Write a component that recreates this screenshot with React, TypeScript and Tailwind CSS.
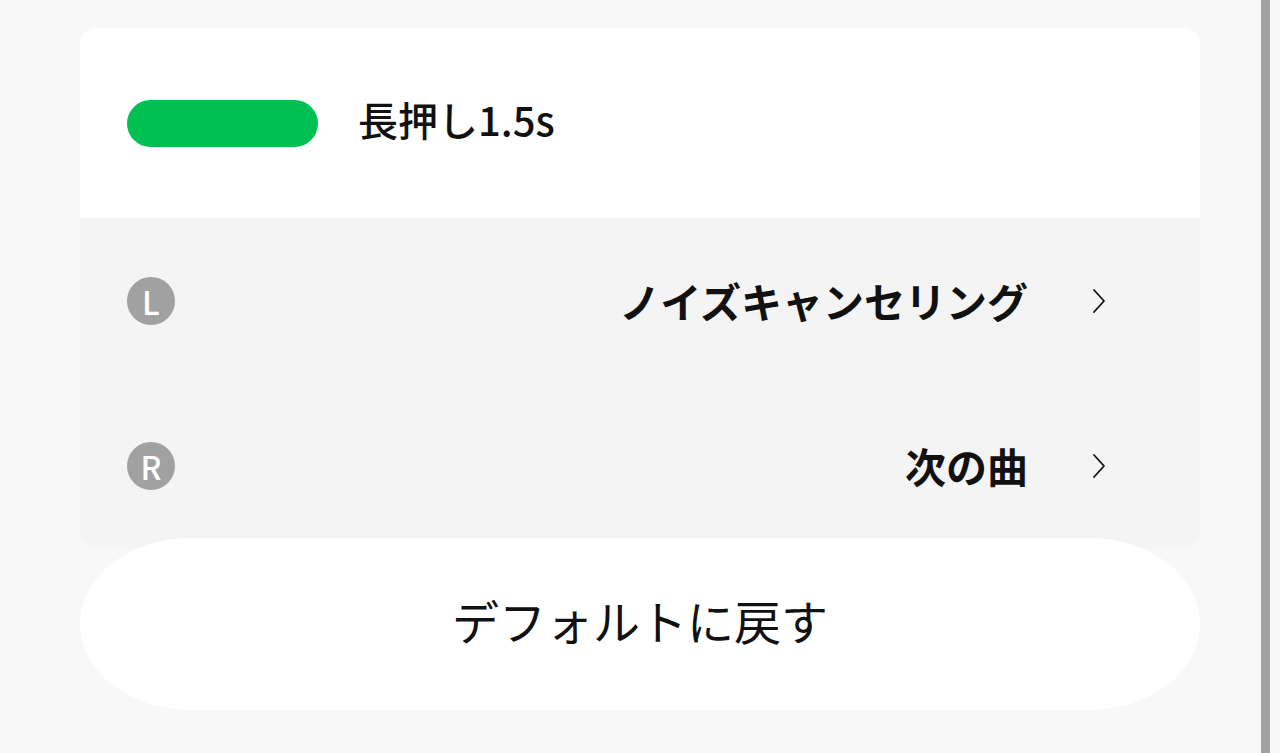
const FONT = "font-['Noto_Sans_CJK_JP','Noto_Sans',sans-serif]"

function Chevron() {
  return (
    <svg viewBox="0 0 16 26" className="w-[16px] h-[26px]" fill="none" stroke="#111" strokeWidth={1.8}
      strokeLinecap="round" strokeLinejoin="round">
      <polyline points="3,2 13,13 3,24" />
    </svg>
  )
}

function SideRow({ side, label }: { side: string; label: string }) {
  return (
    <div className="h-[165px] flex items-center pl-[47px] pr-[93px]">
      <div className="w-[48px] h-[48px] rounded-full bg-[#a1a1a1] flex items-center justify-center text-white text-[32px] font-medium leading-none">
        {side}
      </div>
      <div className="flex-1 text-right text-[41px] font-bold text-[#111] leading-none pr-[63px]">{label}</div>
      <Chevron />
    </div>
  )
}

export default function App() {
  return (
    <div className={`w-[1280px] h-[753px] bg-[#f8f8f8] flex overflow-hidden ${FONT}`}>
      <div className="w-[1261px] pl-[80px] pr-[61px] pt-[28px] flex flex-col">
        <div className="rounded-[16px] overflow-hidden">
          <div className="h-[190px] bg-white flex items-center pl-[47px]">
            <div className="w-[191px] h-[47px] rounded-full bg-[#00c054]" />
            <span className="ml-[40px] mb-[8px] text-[40px] font-medium text-[#111] leading-none">長押し1.5s</span>
          </div>
          <div className="bg-[#f4f4f4]">
            <SideRow side="L" label="ノイズキャンセリング" />
            <SideRow side="R" label="次の曲" />
          </div>
        </div>
        <button className="-mt-[10px] h-[172px] w-full pb-[10px] bg-white rounded-[110px/86px] flex items-center justify-center text-[47px] text-[#111] leading-none">
          デフォルトに戻す
        </button>
      </div>
      <div className="w-[9px] bg-[#a1a1a1]" />
      <div className="flex-1 bg-[#f8f8f8]" />
    </div>
  )
}
